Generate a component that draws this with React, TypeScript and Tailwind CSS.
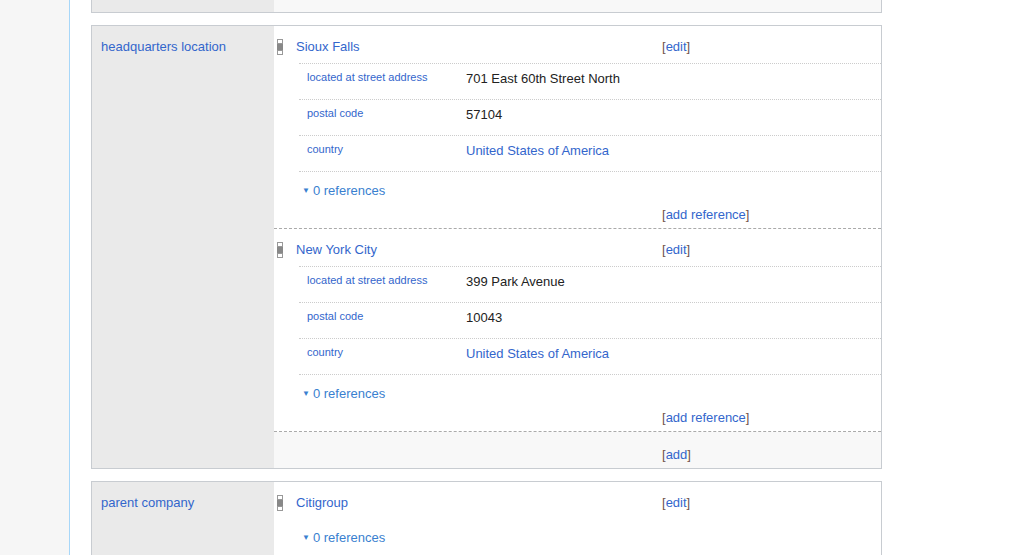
import React from 'react';

const Rank = () => (
  <div className="flex flex-col items-center w-[7px] mt-[2px] mr-[13px] shrink-0">
    <div className="w-[6px] h-[5px] border border-[#999] bg-white" />
    <div className="w-[6px] h-[6px] bg-[#888]" />
    <div className="w-[6px] h-[5px] border border-[#999] bg-white" />
  </div>
);

const Bracket = ({ children }: { children: React.ReactNode }) => (
  <span className="text-[13px]">
    <span className="text-[#72524a]">[</span>
    <span className="text-[#3366cc]">{children}</span>
    <span className="text-[#72524a]">]</span>
  </span>
);

type Q = { label: string; value: string; link?: boolean };

const Statement = ({ value, quals, last }: { value: string; quals: Q[]; last?: boolean }) => (
  <div className={last ? '' : 'border-b border-dashed border-[#aaa]'}>
    <div className="flex items-start pt-[11px] pl-[2px] h-[37px]">
      <Rank />
      <div className="w-[366px] text-[13px] text-[#3366cc]">{value}</div>
      <Bracket>edit</Bracket>
    </div>
    {quals.map((q) => (
      <div key={q.label} className="ml-[25px] flex items-center h-[36px] border-t border-dotted border-[#ccc]">
        <div className="w-[167px] pl-[8px] text-[11px] text-[#3366cc] -mt-[8px]">{q.label}</div>
        <div className={`text-[13px] -mt-[6px] ${q.link ? 'text-[#3366cc]' : 'text-[#222]'}`}>{q.value}</div>
      </div>
    ))}
    <div className={`ml-[25px] ${quals.length ? 'border-t border-dotted border-[#ccc]' : ''} pt-[9px] h-[57px]`}>
      <div className="text-[13px] text-[#3a7fd0] flex items-center gap-[3px] pl-[3px]">
        <span className="text-[8px]">▼</span>0 references
      </div>
      <div className="pl-[363px] mt-[1px]"><Bracket>add reference</Bracket></div>
    </div>
  </div>
);

const us = { label: 'country', value: 'United States of America', link: true };

export default function App() {
  return (
    <div className="w-[1024px] h-[555px] overflow-hidden flex bg-white" style={{ fontFamily: '"Liberation Sans", Arial, sans-serif' }}>
      <div className="w-[70px] shrink-0 bg-[#f6f6f6] border-r border-[#a7d7f9]" />
      <div className="pl-[21px] flex flex-col">
        <div className="shrink-0 w-[791px] h-[13px] flex border-x border-b border-[#c8ccd1] mb-[12px]">
          <div className="w-[182px] bg-[#eaeaea]" />
          <div className="flex-1 bg-[#f8f8f8]" />
        </div>
        <div className="shrink-0 w-[791px] flex border border-[#c8ccd1] mb-[12px]">
          <div className="w-[182px] bg-[#eaeaea] pl-[9px] pt-[11px] text-[13px] text-[#3366cc] shrink-0">headquarters location</div>
          <div className="flex-1">
            <Statement value="Sioux Falls" quals={[{ label: 'located at street address', value: '701 East 60th Street North' }, { label: 'postal code', value: '57104' }, us]} />
            <Statement value="New York City" quals={[{ label: 'located at street address', value: '399 Park Avenue' }, { label: 'postal code', value: '10043' }, us]} />
            <div className="h-[36px] bg-[#f8f8f8] pl-[388px] pt-[10px]"><Bracket>add</Bracket></div>
          </div>
        </div>
        <div className="shrink-0 w-[791px] flex border border-[#c8ccd1]">
          <div className="w-[182px] bg-[#eaeaea] pl-[9px] pt-[11px] text-[13px] text-[#3366cc] shrink-0 h-[200px]">parent company</div>
          <div className="flex-1">
            <Statement value="Citigroup" quals={[]} last />
          </div>
        </div>
      </div>
    </div>
  );
}
